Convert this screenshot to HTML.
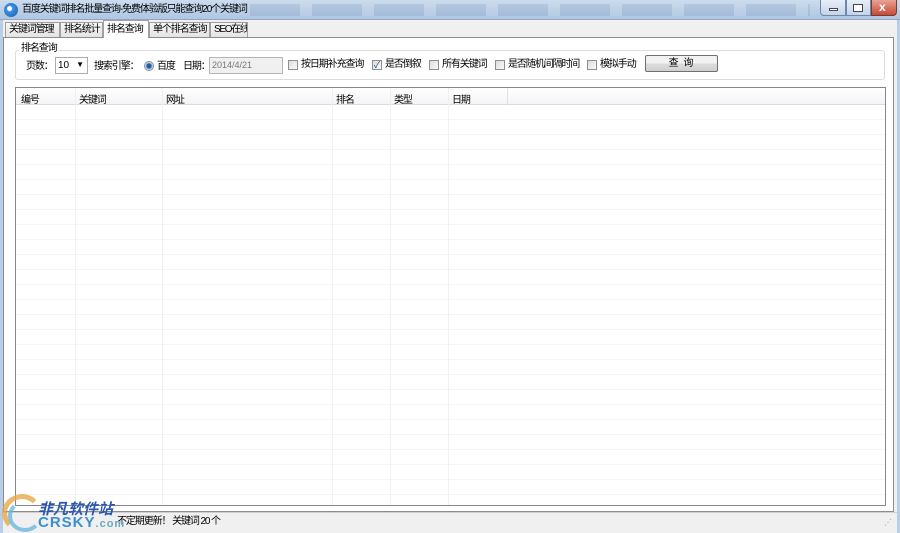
<!DOCTYPE html>
<html><head><meta charset="utf-8"><style>
*{margin:0;padding:0;box-sizing:border-box}
body{width:900px;height:533px;overflow:hidden;background:#f0f0f0;font-family:"Liberation Sans","Noto Sans CJK SC","WenQuanYi Zen Hei",sans-serif;font-size:10px;letter-spacing:-1.1px;color:#000;position:relative}
.abs{position:absolute}
.title{left:0;top:0;width:900px;height:20px;background:linear-gradient(#cddcee,#bcd0e8 50%,#b0c7e2);border-bottom:1px solid #8fa8c8}
.tabs span{position:absolute;top:22px;height:15px;border:1px solid #a0a0a0;border-bottom:none;background:linear-gradient(#f6f6f6,#e4e4e4);line-height:14px;padding:0 1px 0 3px;white-space:nowrap;overflow:hidden}
.cb{width:10px;height:10px;border:1px solid #8e8f8f;background:linear-gradient(135deg,#dcdcdc,#fafafa)}
.lbl{white-space:nowrap;line-height:12px}
</style></head><body>
<div class="abs title"></div>
<div class="abs" style="left:250px;top:4px;width:560px;height:12px;opacity:.18;background:repeating-linear-gradient(90deg,#5d7da3 0 50px,#c8d8ea 50px 62px)"></div>
<div class="abs" style="left:4px;top:3px;width:14px;height:14px;border-radius:50%;background:radial-gradient(circle at 40% 40%,#fff 0 2px,#3d8fe0 3px,#1a5fb0)"></div>
<div class="abs" style="left:22px;top:4px;line-height:12px">百度关键词排名批量查询-免费体验版只能查询20个关键词</div>
<div class="abs" style="left:820px;top:0;width:26px;height:16px;border:1px solid #6f87a8;border-top:none;border-radius:0 0 0 4px;background:linear-gradient(#e6eef8,#c4d4e8)"></div>
<div class="abs" style="left:829px;top:8px;width:9px;height:3px;background:#fff;border:1px solid #445"></div>
<div class="abs" style="left:846px;top:0;width:25px;height:16px;border:1px solid #6f87a8;border-top:none;background:linear-gradient(#e6eef8,#c4d4e8)"></div>
<div class="abs" style="left:853px;top:4px;width:10px;height:8px;border:1px solid #445;background:#fff"></div>
<div class="abs" style="left:871px;top:0;width:26px;height:16px;border:1px solid #7a3a30;border-top:none;border-radius:0 0 4px 0;background:linear-gradient(#e8a393,#c74a36)"></div>
<div class="abs" style="left:879px;top:0;color:#fff;font-weight:bold;font-size:12px">x</div>
<div class="abs" style="left:0;top:20px;width:3px;height:513px;background:#b9cde6"></div>
<div class="abs" style="left:897px;top:20px;width:3px;height:513px;background:#b9cde6"></div>
<div class="abs" style="left:3px;top:37px;width:891px;height:475px;background:#fff;border:1px solid #8c8c8c"></div>
<div class="tabs">
<span style="left:5px;width:55px">关键词管理</span>
<span style="left:60px;width:43px">排名统计</span>
<span style="left:103px;top:20px;height:18px;width:46px;background:#fff;line-height:18px;z-index:2">排名查询</span>
<span style="left:149px;width:61px">单个排名查询</span>
<span style="left:210px;width:38px;letter-spacing:-1.3px">SEO在线</span>
</div>
<div class="abs" style="left:15px;top:50px;width:870px;height:30px;border:1px solid #dcdcdc;border-radius:3px"></div>
<div class="abs lbl" style="left:19px;top:43px;background:#fff;padding:0 2px">排名查询</div>
<div class="abs lbl" style="left:26px;top:61px">页数：</div>
<div class="abs" style="left:55px;top:57px;width:33px;height:17px;border:1px solid #acacac;background:#fff;padding:2px 0 0 2px;letter-spacing:0">10<span style="position:absolute;right:3px;top:2px;font-size:8px">▼</span></div>
<div class="abs lbl" style="left:94px;top:61px">搜索引擎：</div>
<div class="abs" style="left:144px;top:61px;width:10px;height:10px;border-radius:50%;border:1px solid #8e8f8f;background:radial-gradient(#1e5ca8 0 2px,#8fb2d8 3px,#eee 4px)"></div>
<div class="abs lbl" style="left:157px;top:61px">百度</div>
<div class="abs lbl" style="left:183px;top:61px">日期：</div>
<div class="abs" style="left:209px;top:57px;width:74px;height:17px;border:1px solid #b5b5b5;background:#f0f0f0;color:#777;padding:2px 0 0 2px;letter-spacing:0;font-size:9px">2014/4/21</div>
<div class="abs cb" style="left:288px;top:60px"></div><div class="abs lbl" style="left:301px;top:59px">按日期补充查询</div>
<div class="abs cb" style="left:372px;top:60px;font-size:9px;line-height:8px;color:#1c3e84;text-align:center;letter-spacing:0">✓</div><div class="abs lbl" style="left:385px;top:59px">是否倒叙</div>
<div class="abs cb" style="left:429px;top:60px"></div><div class="abs lbl" style="left:442px;top:59px">所有关键词</div>
<div class="abs cb" style="left:495px;top:60px"></div><div class="abs lbl" style="left:508px;top:59px">是否随机间隔时间</div>
<div class="abs cb" style="left:587px;top:60px"></div><div class="abs lbl" style="left:600px;top:59px">模拟手动</div>
<div class="abs" style="left:645px;top:55px;width:73px;height:17px;border:1px solid #707070;border-radius:2px;background:linear-gradient(#f2f2f2 50%,#dddddd 50%,#cfcfcf);text-align:center;line-height:15px;letter-spacing:1px">查 询</div>
<div class="abs" style="left:15px;top:87px;width:871px;height:419px;border:1px solid #828790;background:#fff;
background-image:repeating-linear-gradient(#fff 0 14px,#f4f4f4 14px 15px);background-position:0 17px;overflow:hidden">
<div style="height:17px;background:linear-gradient(#fff,#f3f4f6);border-bottom:1px solid #dcdcdc;position:relative">
<span class="abs" style="left:5px;top:3px">编号</span>
<span class="abs" style="left:63px;top:3px">关键词</span>
<span class="abs" style="left:150px;top:3px">网址</span>
<span class="abs" style="left:320px;top:3px">排名</span>
<span class="abs" style="left:378px;top:3px">类型</span>
<span class="abs" style="left:436px;top:3px">日期</span>
</div>
<div class="abs" style="left:59px;top:0;width:1px;height:419px;background:#f0f0f0"></div>
<div class="abs" style="left:146px;top:0;width:1px;height:419px;background:#f0f0f0"></div>
<div class="abs" style="left:316px;top:0;width:1px;height:419px;background:#f0f0f0"></div>
<div class="abs" style="left:374px;top:0;width:1px;height:419px;background:#f0f0f0"></div>
<div class="abs" style="left:432px;top:0;width:1px;height:419px;background:#f0f0f0"></div>
<div class="abs" style="left:491px;top:0;width:1px;height:17px;background:#e0e0e0"></div>
</div>
<div class="abs" style="left:3px;top:512px;width:894px;height:21px;background:#f0f0f0;border-top:1px solid #d0d0d0"></div>
<div class="abs lbl" style="left:117px;top:516px">不定期更新！ 关键词 20 个</div>
<div class="abs" style="left:884px;top:518px;color:#999;font-size:8px">⋰</div>
<div class="abs" style="left:2px;top:494px;width:40px;height:38px;border-radius:50%;border:5px solid #e8a849;border-right-color:transparent;border-bottom-color:transparent;opacity:.8"></div>
<div class="abs" style="left:8px;top:500px;width:34px;height:32px;border-radius:50%;border:4px solid #6fb8e0;border-right-color:transparent;border-top-color:transparent;opacity:.8"></div>
<div class="abs" style="left:38px;top:498px;font-size:15px;letter-spacing:0;font-weight:bold;font-style:italic;color:#2a58b0">非凡软件站</div>
<div class="abs" style="left:38px;top:514px;font-size:15px;font-weight:bold;color:#3b8fd0;letter-spacing:1px">CRSKY<span style="font-size:11px;color:#6ab">.com</span></div>
</body></html>
